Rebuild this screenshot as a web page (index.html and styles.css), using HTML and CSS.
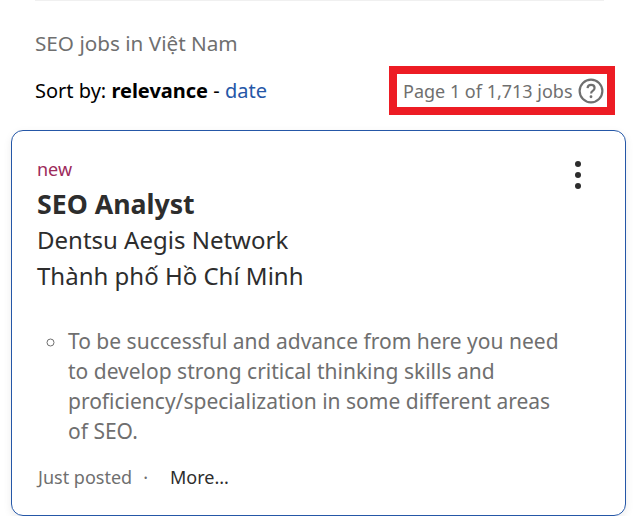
FILE: index.html
```html
<!DOCTYPE html>
<html lang="en">
    <head>
        <meta charset="UTF-8">
        <meta name="viewport" content="width=device-width, initial-scale=1.0">
        <title>SEO jobs in Việt Nam</title>

        <link rel="stylesheet" href="styles.css">
    </head>
    <body>
        <div class="top">
            <h1 class="heading">SEO jobs in Việt Nam</h1>
            <div class="toolbar">
                <div class="sort">Sort by: <b>relevance</b> - <a href="#">date</a></div>
                <div class="count">
                    <span>Page 1 of 1,713 jobs</span>
                    <svg class="help" width="26" height="26" viewBox="0 0 24 24" aria-hidden="true">
                        <circle cx="12" cy="12" r="10.5" fill="none" stroke="#6f6f6f" stroke-width="2"/>
                        <path d="M8.8 9.4c.2-1.900 1.500-3 3.300-3 1.900 0 3.200 1.100 3.200 2.800 0 1.300-.7 2-1.700 2.700-1 .7-1.500 1.200-1.500 2.400" fill="none" stroke="#6f6f6f" stroke-width="2"/>
                        <circle cx="12" cy="17.300" r="1.300" fill="#6f6f6f"/>
                    </svg>
                </div>
            </div>
        </div>

        <div class="card">
            <button class="more-btn" aria-label="Job actions"><i></i><i></i><i></i></button>
            <div class="new">new</div>
            <h2 class="title">SEO Analyst</h2>
            <div class="company">Dentsu Aegis Network</div>
            <div class="company">Thành phố Hồ Chí Minh</div>
            <ul class="snippet">
                <li>To be successful and advance from here you need to develop strong critical thinking skills and proficiency/specialization in some different areas of SEO.</li>
            </ul>
            <div class="foot">
                <span class="posted">Just posted</span>
                <span class="dot">·</span>
                <a href="#" class="more">More...</a>
            </div>
        </div>
    </body>
</html>
```

FILE: styles.css
```css
* {
    box-sizing: border-box;
    font-family: "Noto Sans", sans-serif;
}

body {
    margin: 0;
    background: white;
    color: #2d2d2d;
}

.top {
    margin: 0 33px 0 35px;
    border-top: 1px solid #f0f0f0;
    padding-top: 28px;
}

.heading {
    margin: 0;
    font-size: 20.7px;
    font-weight: normal;
    line-height: 28px;
    color: #6f6f6f;
}

.toolbar {
    display: flex;
    justify-content: space-between;
    align-items: center;
    margin-top: 9px;
    margin-right: -11px;
}

.sort {
    font-size: 20px;
    color: black;
}
.sort a {
    color: #2557a7;
    text-decoration: none;
}

.count {
    display: flex;
    align-items: center;
    gap: 5px;
    width: 226px;
    height: 49px;
    padding-left: 6px;
    border: 8px solid #ed1c24;
    font-size: 18px;
    color: #6f6f6f;
    white-space: nowrap;
}
.help {
    flex: none;
}

.card {
    position: relative;
    width: 615px;
    margin: 15px 0 0 11px;
    padding: 25px;
    border: 1px solid #2557a7;
    border-radius: 12px;
    box-shadow: 0 3px 8px rgba(0, 0, 0, 0.08);
}

.more-btn {
    position: absolute;
    top: 30px;
    right: 44px;
    display: flex;
    flex-direction: column;
    gap: 5px;
    padding: 0;
    border: 0;
    background: none;
}
.more-btn i {
    display: block;
    width: 6px;
    height: 6px;
    border-radius: 50%;
    background: #2d2d2d;
}

.new {
    font-size: 18px;
    line-height: 26px;
    color: #9d2b5b;
}

.title {
    margin: 4px 0 0;
    font-size: 26.700px;
    font-weight: bold;
    line-height: 36px;
}

.company {
    font-size: 24px;
    line-height: 36px;
}

.snippet {
    margin: 32px 30px 0 0;
    padding-left: 31px;
    list-style-type: circle;
    font-size: 21px;
    line-height: 30px;
    color: #6f6f6f;
}

.foot {
    display: flex;
    align-items: center;
    margin-top: 18px;
    padding-left: 1px;
    font-size: 18px;
    line-height: 26px;
}
.posted {
    color: #6f6f6f;
}
.dot {
    margin: 0 22px 0 11px;
    color: #6f6f6f;
}
.more {
    color: #2d2d2d;
    text-decoration: none;
}
```
